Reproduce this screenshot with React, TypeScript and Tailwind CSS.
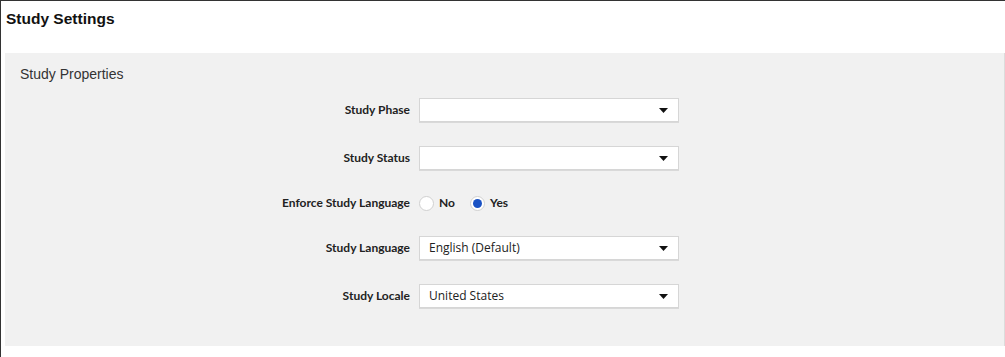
import { useState } from "react";

const fields = [
  { label: "Study Phase", value: "" },
  { label: "Study Status", value: "" },
];

const lower = [
  { label: "Study Language", value: "English (Default)" },
  { label: "Study Locale", value: "United States" },
];

function Caret() {
  return (
    <svg width="9" height="5" viewBox="0 0 9 5" className="shrink-0">
      <path d="M0 0h9L4.5 5z" fill="#111" />
    </svg>
  );
}

function SelectBox({ value }: { value: string }) {
  return (
    <div className="w-[260px] h-[24px] bg-white border border-[#d6d6d6] shadow-[0_1px_0_#d9d9d9] flex items-center justify-between pl-[9px] pr-[10px] text-[12px] text-[#222] font-['Open_Sans',sans-serif]">
      <span>{value}</span>
      <Caret />
    </div>
  );
}

function Row({ label, children, h = "h-[24px]" }: { label: string; children: React.ReactNode; h?: string }) {
  return (
    <div className={`flex items-center ${h}`}>
      <div className="w-[414px] shrink-0 pr-[9px] text-right text-[12px] font-bold text-[#222] font-['Lato',sans-serif]">
        {label}
      </div>
      {children}
    </div>
  );
}

function Radio({ checked, label, onClick }: { checked: boolean; label: string; onClick: () => void }) {
  return (
    <button onClick={onClick} className="flex items-center gap-[5px] mr-[15px]">
      <span className="size-[15px] rounded-full bg-white border border-[#d0d0d0] flex items-center justify-center">
        {checked && <span className="size-[9px] rounded-full bg-[#1a52c4]" />}
      </span>
      <span className="text-[12px] font-bold text-[#222] font-['Lato',sans-serif]">{label}</span>
    </button>
  );
}

export default function App() {
  const [enforce, setEnforce] = useState(true);
  return (
    <div className="w-[1005px] h-[357px] bg-white border-l border-t border-[#333] overflow-hidden">
      <div className="h-[52px] pl-[5px] pt-[9px]">
        <h1 className="text-[15.5px] font-bold text-[#111] font-['Liberation_Sans',Arial,sans-serif] leading-[18px]">
          Study Settings
        </h1>
      </div>
      <div className="ml-[4px] h-[293px] bg-[#f1f1f1] border-r border-[#dcdcdc] pt-[12px]">
        <h2 className="pl-[15px] text-[14px] text-[#333] leading-[18px] font-['Liberation_Sans',Arial,sans-serif]">
          Study Properties
        </h2>
        <div className="mt-[15px] flex flex-col gap-[24px]">
          {fields.map((f) => (
            <Row key={f.label} label={f.label}>
              <SelectBox value={f.value} />
            </Row>
          ))}
          <Row label="Enforce Study Language" h="h-[18px]">
            <Radio checked={!enforce} label="No" onClick={() => setEnforce(false)} />
            <Radio checked={enforce} label="Yes" onClick={() => setEnforce(true)} />
          </Row>
          {lower.map((f) => (
            <Row key={f.label} label={f.label}>
              <SelectBox value={f.value} />
            </Row>
          ))}
        </div>
      </div>
    </div>
  );
}
